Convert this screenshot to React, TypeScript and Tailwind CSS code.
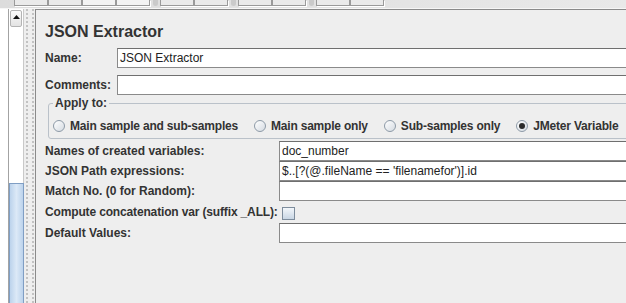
import React from 'react';

const ToolButton: React.FC<{ light?: boolean }> = ({ light = false }) => (
  <div
    className={`w-[34px] h-[6px] border border-t-0 border-[#9a9a9a] shadow-[1px_1px_0_#ffffff] ${
      light ? 'bg-[#f3f3f3]' : 'bg-[#eaeaea]'
    }`}
  />
);

const ToolSeparator: React.FC = () => (
  <div className="w-[10px] h-[7px] flex justify-center">
    <div className="w-[5px] h-[6px] rounded-b-[3px] bg-[#cacaca]" />
  </div>
);

interface RadioProps {
  label: string;
  checked?: boolean;
}

const Radio: React.FC<RadioProps> = ({ label, checked = false }) => (
  <div className="flex items-center gap-[5px]">
    <div className="w-[12px] h-[12px] rounded-full border border-[#8d9aa7] bg-gradient-to-br from-[#ffffff] to-[#d5dbe2] flex items-center justify-center">
      {checked && <div className="w-[6px] h-[6px] rounded-full bg-[#2b2b2b]" />}
    </div>
    <span className="font-bold whitespace-nowrap tracking-[-0.2px]">{label}</span>
  </div>
);

const TextField: React.FC<{ value?: string; className?: string }> = ({ value = '', className = '' }) => (
  <div
    className={`flex-1 h-[20px] bg-white border border-[#8a8a8a] border-t-[#6f6f6f] border-r-0 pl-[2px] flex items-center text-[#222] whitespace-nowrap ${className}`}
  >
    {value}
  </div>
);

const fields: { label: string; value?: string; checkbox?: boolean }[] = [
  { label: 'Names of created variables:', value: 'doc_number' },
  { label: 'JSON Path expressions:', value: "$..[?(@.fileName == 'filenamefor')].id" },
  { label: 'Match No. (0 for Random):', value: '' },
  { label: 'Compute concatenation var (suffix _ALL):', checkbox: true },
  { label: 'Default Values:', value: '' },
];

export default function App() {
  return (
    <div className="w-[626px] h-[303px] overflow-hidden bg-[#eeeeee] font-['Liberation_Sans',Arial,sans-serif] text-[12px] text-[#333]">
      {/* toolbar strip */}
      <div className="h-[9px] flex items-start pl-[14px] bg-gradient-to-r from-[#dcdcdc] via-[#e2e2e2] to-[#e9e9e9] border-b border-[#f6f6f6]">
        <ToolButton />
        <ToolButton />
        <ToolButton light />
        <ToolButton light />
        <ToolSeparator />
        <ToolButton />
        <ToolButton />
        <ToolSeparator />
        <ToolButton />
        <ToolButton />
        <ToolSeparator />
        <ToolButton />
        <ToolButton />
      </div>

      <div className="flex h-[294px]">
        {/* tree edge */}
        <div className="w-[8px] bg-white" />

        {/* scrollbar */}
        <div className="w-[16px] flex flex-col border-l border-[#a3a3a3] bg-white">
          <div className="h-[19px] pt-[1px] pl-[1px] pr-[1px] border-r border-[#c9c9c9]">
            <div className="h-[17px] border border-[#b4b4b4] rounded-[2px] bg-gradient-to-b from-[#fbfbfb] to-[#e3e3e3] flex justify-center pt-[4px]">
              <svg width="7" height="4" viewBox="0 0 7 4">
                <polygon points="3.5,0 7,4 0,4" fill="#111" />
              </svg>
            </div>
          </div>
          <div className="h-[155px] border-r border-[#c9c9c9]" />
          <div className="flex-1 border-l border-r border-t border-[#7f9ec4] bg-gradient-to-r from-[#bcd3ec] via-[#dce9f7] to-[#bcd3ec]" />
        </div>

        {/* splitter */}
        <div className="w-[11px] flex gap-[4px] pl-[2px]">
          <div className="h-full border-l-2 border-dotted border-[#c2c2c2]" />
          <div className="h-full border-l-2 border-dotted border-[#c2c2c2]" />
        </div>

        {/* editor panel */}
        <div className="flex-1 border-l border-t border-[#8a8a8a] overflow-hidden">
          <div className="w-[700px] pl-[9px] pt-[12px]">
            <h1 className="text-[16px] leading-[20px] font-bold text-[#333]">JSON Extractor</h1>

            <div className="mt-[6px] h-[19px] flex items-center">
              <span className="w-[72px] font-bold">Name:</span>
              <TextField value="JSON Extractor" className="h-[19px]" />
            </div>

            <div className="mt-[8px] h-[19px] flex items-center">
              <span className="w-[72px] font-bold">Comments:</span>
              <TextField className="h-[19px]" />
            </div>

            <fieldset className="mt-[2px] ml-[3px] border border-[#bac1c9] rounded-[3px] pl-[4px] pb-[2px]">
              <legend className="px-[2px] leading-[14px] font-bold">Apply to:</legend>
              <div className="pt-[6px] h-[26px] flex items-center gap-[16px]">
                <Radio label="Main sample and sub-samples" />
                <Radio label="Main sample only" />
                <Radio label="Sub-samples only" />
                <Radio label="JMeter Variable" checked />
              </div>
            </fieldset>

            <div className="mt-[2px] grid grid-cols-[234px_1fr]">
              {fields.map((f, i) => (
                <React.Fragment key={`field-${i}`}>
                  <div
                    className={`${
                      f.checkbox ? 'h-[22px] tracking-[-0.15px]' : 'h-[20px]'
                    } flex items-center font-bold whitespace-nowrap`}
                  >
                    {f.label}
                  </div>
                  {f.checkbox ? (
                    <div className="h-[22px] flex items-center pt-[3px]">
                      <div className="ml-[3px] w-[13px] h-[13px] border border-[#7d8c9c] bg-gradient-to-b from-[#f2f6fa] to-[#c9d6e4]" />
                    </div>
                  ) : (
                    <div className="h-[20px] flex">
                      <TextField value={f.value} />
                    </div>
                  )}
                </React.Fragment>
              ))}
            </div>
          </div>
        </div>
      </div>
    </div>
  );
}
